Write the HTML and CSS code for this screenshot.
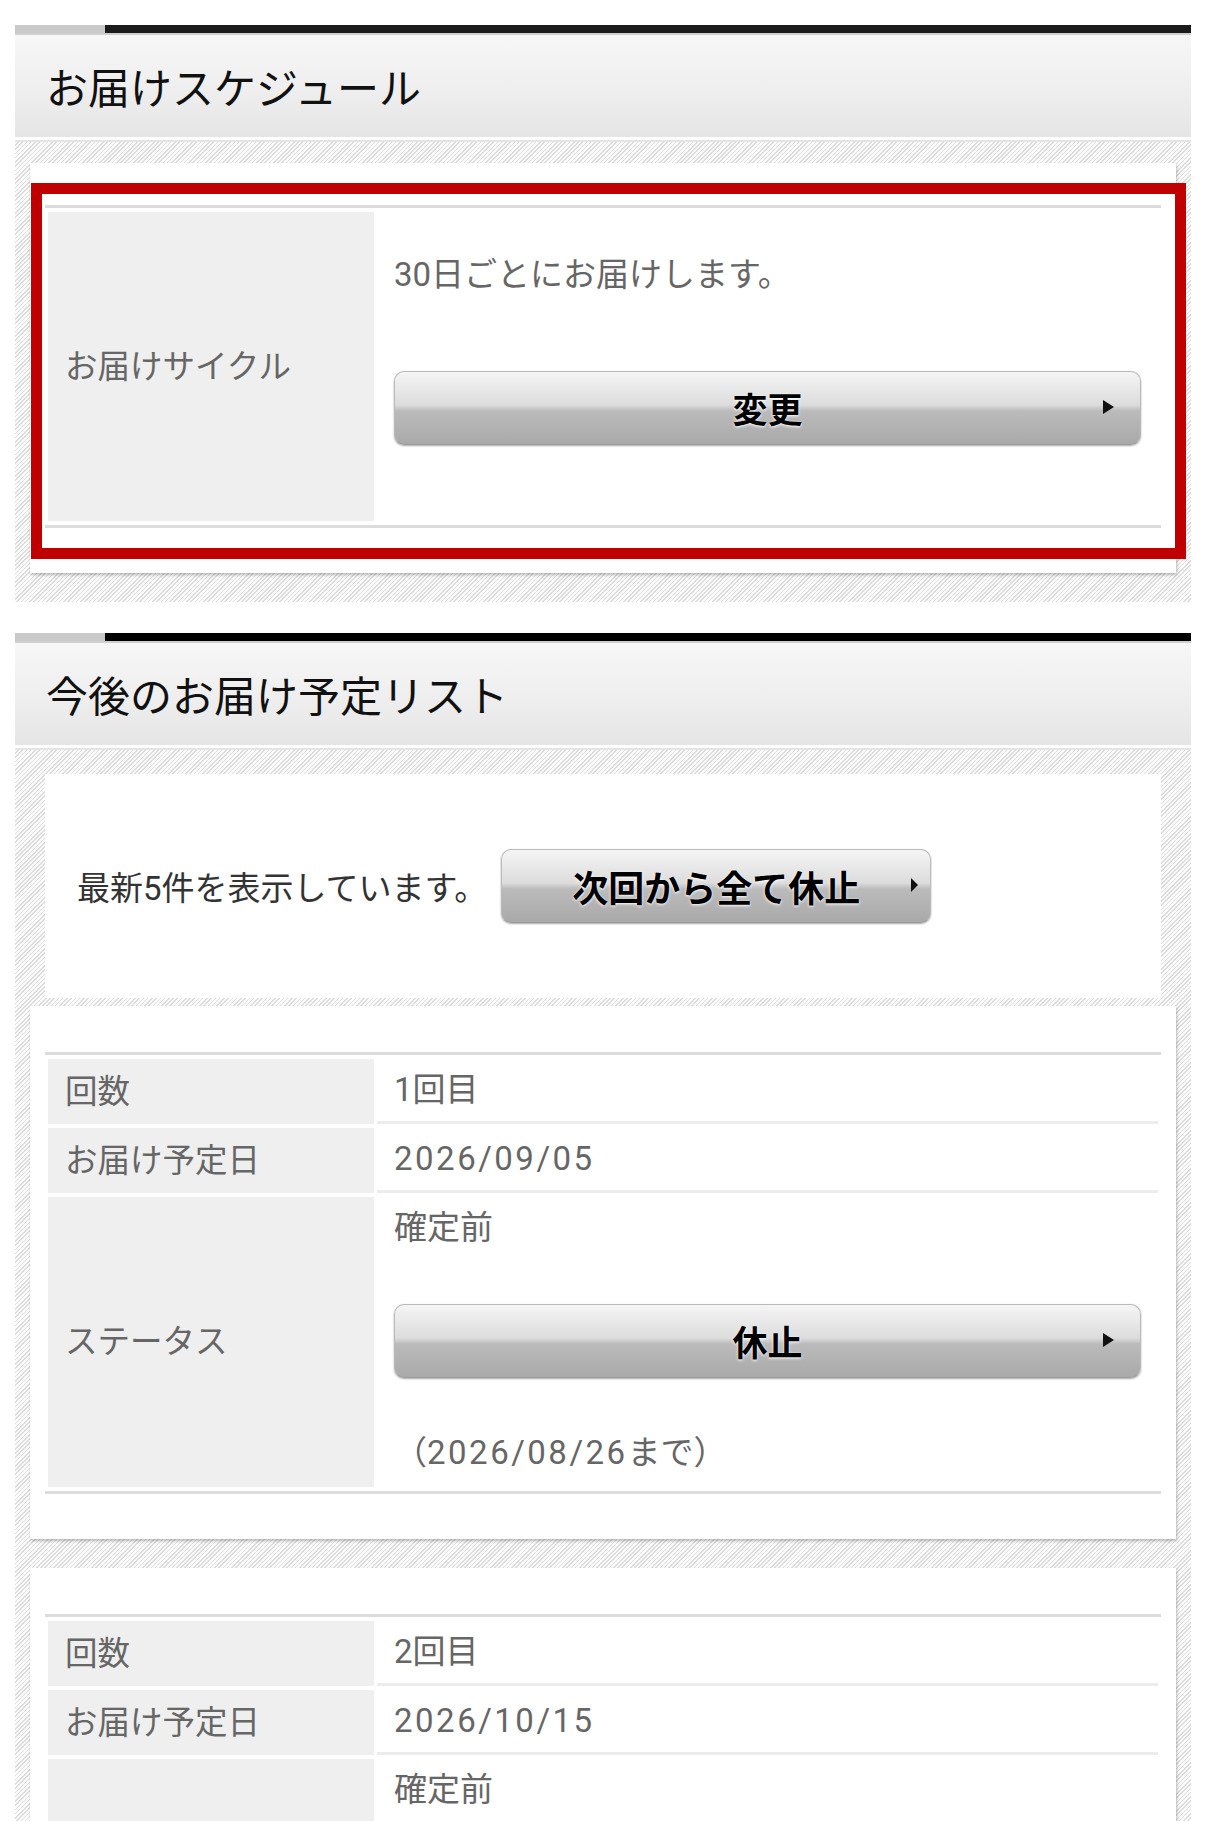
FILE: index.html
```html
<!DOCTYPE html>
<html lang="ja">
<head>
  <meta charset="UTF-8">
  <meta name="viewport" content="width=device-width, initial-scale=1.0">
  <title>お届けスケジュール</title>
  <link rel="stylesheet" href="styles.css">
</head>
<body>
  <section class="sec">
    <div class="sec-bar"></div>
    <h2 class="sec-head">お届けスケジュール</h2>
    <div class="sec-body">
      <div class="card card-cycle">
        <table class="info">
          <tr>
            <th>お届けサイクル</th>
            <td class="cycle">
              <p>30日ごとにお届けします。</p>
              <a class="btn" href="#">変更</a>
            </td>
          </tr>
        </table>
        <div class="mark"></div>
      </div>
    </div>
  </section>

  <section class="sec sec-list">
    <div class="sec-bar"></div>
    <h2 class="sec-head">今後のお届け予定リスト</h2>
    <div class="sec-body">
      <div class="intro">
        <p>最新5件を表示しています。</p>
        <a class="btn btn-sm" href="#">次回から全て休止</a>
      </div>

      <div class="card">
        <table class="info">
          <tr><th>回数</th><td>1回目</td></tr>
          <tr><th>お届け予定日</th><td><span class="date">2026/09/05</span></td></tr>
          <tr>
            <th>ステータス</th>
            <td class="status">
              <p>確定前</p>
              <a class="btn" href="#">休止</a>
              <p>（<span class="date">2026/08/26</span>まで）</p>
            </td>
          </tr>
        </table>
      </div>

      <div class="card">
        <table class="info">
          <tr><th>回数</th><td>2回目</td></tr>
          <tr><th>お届け予定日</th><td><span class="date">2026/10/15</span></td></tr>
          <tr>
            <th>ステータス</th>
            <td class="status">
              <p>確定前</p>
              <a class="btn" href="#">休止</a>
              <p>（<span class="date">2026/10/05</span>まで）</p>
            </td>
          </tr>
        </table>
      </div>
    </div>
  </section>
</body>
</html>
```

FILE: styles.css
```css
/* Base */
body {
  margin: 0;
  padding: 25px 15px 0;
  background-color: #fff;
  color: #666;
  font-family: Roboto, "Noto Sans CJK JP", sans-serif;
}

/* Section heading */
.sec-bar {
  height: 8px;
  background: linear-gradient(to right, #c9c9c9 90px, #1c1c1c 90px);
}

.sec-list {
  margin-top: 31px;
}

.sec-list .sec-bar {
  background: linear-gradient(to right, #c9c9c9 90px, #000 90px);
}

.sec-head {
  margin: 0;
  height: 102px;
  padding: 0 31px;
  line-height: 102px;
  font-family: "Noto Sans CJK JP", sans-serif;
  font-size: 42px;
  font-weight: 400;
  color: #111;
  border-top: 2px solid #cfcfcf;
  border-bottom: 3px solid #fff;
  background: linear-gradient(#f7f7f7, #eeeeee 55%, #e5e5e5);
}

.sec-body {
  padding: 21px 15px 29px;
  border-top: 2px solid #e4e4e4;
  background: repeating-linear-gradient(135deg, #fcfcfc 0 1.9px, #dcdcdc 1.9px 3px);
}

.sec-list .sec-body {
  padding-top: 24px;
}

/* Cards */
.card {
  position: relative;
  padding: 46px 15px 45px;
  background-color: #fff;
  box-shadow: 1px 2px 3px rgba(0, 0, 0, 0.25);
}

.card + .card {
  margin-top: 29px;
}

.card-cycle {
  padding-top: 42px;
}

/* red highlight frame */
.mark {
  position: absolute;
  top: 20px;
  left: 1px;
  right: -10px;
  bottom: 14px;
  border: 11px solid #c00000;
  pointer-events: none;
}

/* Info table */
.info {
  width: 100%;
  border-collapse: separate;
  border-spacing: 3px 4px;
  border-top: 3px solid #dcdcdc;
  border-bottom: 3px solid #dcdcdc;
  font-size: 33px;
}

.info th {
  width: 292px;
  padding: 8px 17px;
  background-color: #efefef;
  font-size: 32.5px;
  font-weight: 400;
  text-align: left;
  line-height: 46px;
  vertical-align: middle;
  color: #666;
}

.info td {
  padding: 8px 17px;
  line-height: 46px;
  vertical-align: top;
  border-bottom: 3px solid #ececec;
}

.info tr:last-child td {
  padding-bottom: 11px;
  border-bottom: 0;
}

.info td p {
  margin: 0;
}

.date {
  letter-spacing: 2.5px;
}

.info .cycle p {
  margin-top: 32px;
}

.cycle .btn {
  margin: 73px 0 65px;
}

.status .btn {
  margin: 53px 0 52px;
}

/* Buttons */
.btn {
  position: relative;
  display: block;
  box-sizing: border-box;
  height: 74px;
  border: 1px solid #b9b9b9;
  border-bottom-color: #9a9a9a;
  border-radius: 10px;
  background: linear-gradient(#f5f5f5, #dcdcdc 46%, #bbbbbb 54%, #a9a9a9);
  box-shadow: 0 1px 2px rgba(0, 0, 0, 0.35);
  color: #000;
  font-family: "Noto Sans CJK JP", sans-serif;
  font-size: 35px;
  font-weight: 700;
  line-height: 72px;
  text-align: center;
  text-decoration: none;
  text-shadow: 0 1px 3px #fff, 0 0 1px #fff;
}

.btn::after {
  content: "";
  position: absolute;
  right: 26px;
  top: 50%;
  margin-top: -8px;
  border-left: 11px solid #111;
  border-top: 7px solid transparent;
  border-bottom: 7px solid transparent;
}

/* Intro row */
.intro {
  display: flex;
  align-items: center;
  gap: 14px;
  margin: 0 15px 8px;
  padding: 75px 32px;
  background-color: #fff;
  font-size: 33px;
  color: #333;
}

.intro p {
  margin: 0;
}

.intro .btn-sm {
  flex: none;
  width: 430px;
  font-size: 36px;
}

.btn-sm::after {
  right: 12px;
  border-left-width: 7px;
}
```
